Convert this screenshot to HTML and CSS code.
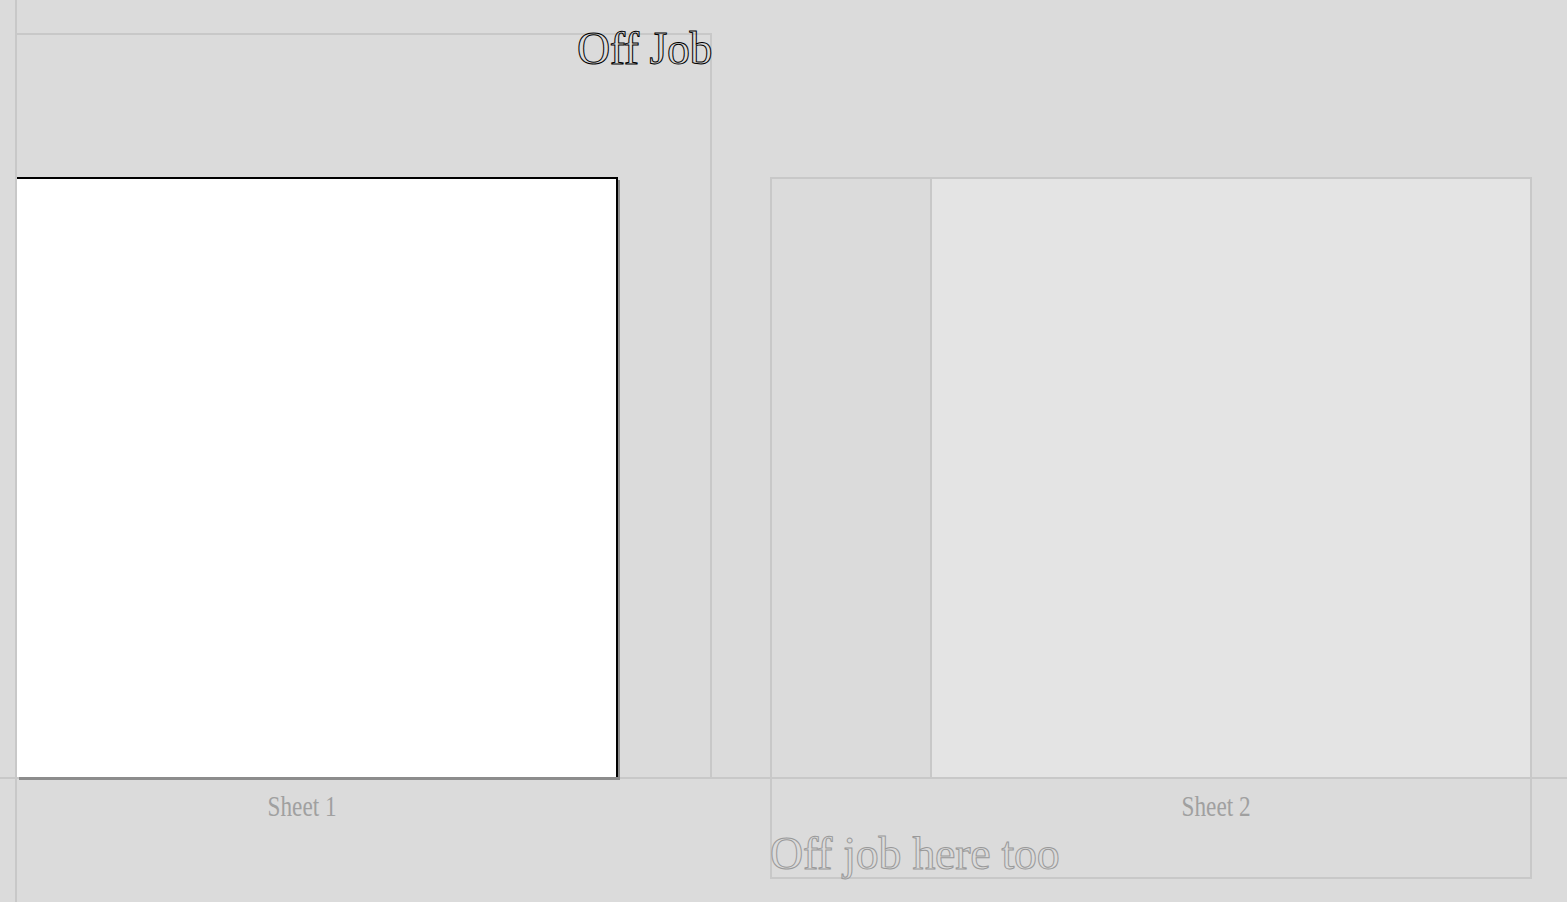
FILE: index.html
```html
<!DOCTYPE html>
<html>
<head>
  <title>Off Job</title>
  <meta name="viewport" content="width=device-width, initial-scale=1.0">
  <link rel="stylesheet" href="styles.css">
</head>
<body>
  <div class="canvas">
    <div class="stage">
      <div class="gutter"></div>
      <div class="job job-one">
        <div class="job-frame">
          <h1 class="job-title outline">Off Job</h1>
          <div class="sheet-paper"></div>
        </div>
      </div>
      <div class="spacer"></div>
      <div class="job job-two">
        <div class="sheet-ghost">
          <div class="sheet-margin"></div>
          <div class="sheet-print"></div>
        </div>
      </div>
    </div>
    <div class="captions">
      <div class="gutter"></div>
      <div class="job job-one">
        <p class="sheet-label label-one"><span>Sheet 1</span></p>
      </div>
      <div class="spacer"></div>
      <div class="job job-two">
        <div class="ghost-foot">
          <p class="sheet-label label-two"><span>Sheet 2</span></p>
          <p class="job-note outline">Off job here too</p>
        </div>
      </div>
    </div>
  </div>
</body>
</html>
```
FILE: styles.css
```css
/* print layout canvas */
* {
  box-sizing: border-box;
}
html, body {
  margin: 0;
  padding: 0;
}
body {
  background: #dbdbdb;
  font-family: "Liberation Serif", "Times New Roman", serif;
  overflow: hidden;
}
.canvas {
  height: 902px;
  display: flex;
  flex-direction: column;
}
.stage {
  display: flex;
  height: 779px;
  border-bottom: 2px solid #c8c8c8;
}
.captions {
  display: flex;
  flex: 1;
}
.gutter {
  width: 15px;
  flex: none;
}
.spacer {
  width: 58px;
  flex: none;
}
.job-one {
  width: 697px;
  flex: none;
  border-left: 2px solid #c8c8c8;
}
.job-two {
  width: 762px;
  flex: none;
}

/* hollow lettering */
.outline {
  color: transparent;
  -webkit-text-stroke: 1px #000;
}

/* sheet 1 */
.stage .job-one {
  padding-top: 33px;
}
.job-frame {
  height: 100%;
  border-top: 2px solid #c8c8c8;
  border-right: 2px solid #c8c8c8;
}
.job-title {
  margin: -9px -2px 0 0;
  font-size: 46px;
  line-height: 46px;
  font-weight: normal;
  text-align: right;
  letter-spacing: -0.5px;
}
.sheet-paper {
  width: 601px;
  height: 600px;
  margin-top: 105px;
  background: #fff;
  border-top: 2px solid #000;
  border-right: 2px solid #000;
  box-shadow: 2px 3px 0 #8c8c8c;
}

/* sheet 2 */
.stage .job-two {
  padding-top: 177px;
}
.sheet-ghost {
  height: 100%;
  display: flex;
  border: 2px solid #c8c8c8;
  border-bottom: 0;
}
.sheet-margin {
  width: 160px;
  border-right: 2px solid #c8c8c8;
}
.sheet-print {
  flex: 1;
  background: #e4e4e4;
}
.ghost-foot {
  height: 100px;
  border: 2px solid #c8c8c8;
  border-top: 0;
}

/* captions */
.sheet-label {
  margin: 0;
  padding-top: 13px;
  font-size: 29px;
  line-height: 29px;
  color: #a0a0a0;
  text-align: center;
}
.sheet-label span {
  display: inline-block;
  transform: scaleX(0.8);
}
.label-one {
  width: 570px;
}
.label-two {
  padding-left: 131px;
}
.job-note {
  margin: 10px 0 0 -2px;
  font-size: 46px;
  line-height: 46px;
  white-space: nowrap;
  letter-spacing: -0.3px;
  -webkit-text-stroke-color: #999;
}
```
